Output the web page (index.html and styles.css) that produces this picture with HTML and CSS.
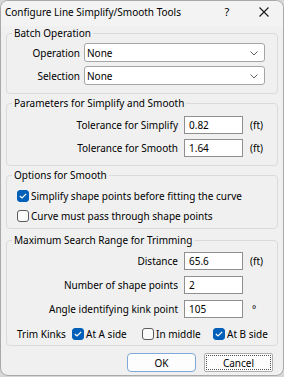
FILE: index.html
```html
<!DOCTYPE html>
<html>
<head>
<meta charset="utf-8">
<link rel="stylesheet" href="styles.css">
</head>
<body>
<div class="window">
  <div class="titlebar">
    <span class="title">Configure Line Simplify/Smooth Tools</span>
    <span class="help">?</span>
    <span class="close"><svg width="10" height="10" viewBox="0 0 10 10"><path d="M0.5 0.5 L9.5 9.5 M9.5 0.5 L0.5 9.5" stroke="#1a1a1a" stroke-width="1.1" fill="none"/></svg></span>
  </div>
  <div class="content">
    <fieldset class="group g1">
      <legend>Batch Operation</legend>
      <div class="combo-grid">
        <span class="lbl">Operation</span>
        <div class="combo"><span>None</span><svg class="chev" width="8" height="5" viewBox="0 0 8 5"><path d="M0.5 0.5 L4 4 L7.5 0.5" stroke="#606060" stroke-width="1" fill="none"/></svg></div>
        <span class="lbl">Selection</span>
        <div class="combo"><span>None</span><svg class="chev" width="8" height="5" viewBox="0 0 8 5"><path d="M0.5 0.5 L4 4 L7.5 0.5" stroke="#606060" stroke-width="1" fill="none"/></svg></div>
      </div>
    </fieldset>

    <fieldset class="group g2">
      <legend>Parameters for Simplify and Smooth</legend>
      <div class="field-grid">
        <span class="lbl">Tolerance for Simplify</span>
        <div class="input">0.82</div>
        <span class="unit">(ft)</span>
        <span class="lbl">Tolerance for Smooth</span>
        <div class="input">1.64</div>
        <span class="unit">(ft)</span>
      </div>
    </fieldset>

    <fieldset class="group g3">
      <legend>Options for Smooth</legend>
      <div class="checks">
        <div class="check-row"><span class="cb checked"><svg width="8" height="6" viewBox="0 0 8 6"><path d="M0.8 3 L3 5 L7.2 0.8" stroke="#fff" stroke-width="1.2" fill="none"/></svg></span><span>Simplify shape points before fitting the curve</span></div>
        <div class="check-row"><span class="cb"></span><span>Curve must pass through shape points</span></div>
      </div>
    </fieldset>

    <fieldset class="group g4">
      <legend>Maximum Search Range for Trimming</legend>
      <div class="field-grid g4grid">
        <span class="lbl">Distance</span>
        <div class="input">65.6</div>
        <span class="unit">(ft)</span>
        <span class="lbl">Number of shape points</span>
        <div class="input">2</div>
        <span class="unit"></span>
        <span class="lbl">Angle identifying kink point</span>
        <div class="input">105</div>
        <span class="unit deg">°</span>
      </div>
      <div class="trim-row">
        <span class="trim-lbl">Trim Kinks</span>
        <span class="trim-item a"><span class="cb checked"><svg width="8" height="6" viewBox="0 0 8 6"><path d="M0.8 3 L3 5 L7.2 0.8" stroke="#fff" stroke-width="1.2" fill="none"/></svg></span><span>At A side</span></span>
        <span class="trim-item b"><span class="cb"></span><span>In middle</span></span>
        <span class="trim-item c"><span class="cb checked"><svg width="8" height="6" viewBox="0 0 8 6"><path d="M0.8 3 L3 5 L7.2 0.8" stroke="#fff" stroke-width="1.2" fill="none"/></svg></span><span>At B side</span></span>
      </div>
    </fieldset>

    <div class="buttons">
      <button class="btn ok">OK</button>
      <button class="btn cancel"><span>Cancel</span></button>
    </div>
  </div>
</div>
</body>
</html>
```

FILE: styles.css
```css
* { box-sizing: border-box; }
html, body { margin: 0; padding: 0; }
body {
  width: 284px;
  height: 377px;
  background: #d6d6d6;
  font-family: "Noto Sans", "Segoe UI", sans-serif;
  font-size: 10px;
  color: #000;
  overflow: hidden;
}
.window {
  width: 284px;
  height: 376px;
  border: 1px solid #a9a9a9;
  border-radius: 8px;
  background: #f0f0f0;
  overflow: hidden;
  display: flex;
  flex-direction: column;
}
.titlebar {
  height: 25px;
  flex: none;
  display: flex;
  align-items: flex-start;
  padding: 4px 0 0 4px;
  background: #f3f3f3;
  line-height: 14px;
}
.title { flex: 1; }
.help {
  width: 36px;
  text-align: center;
  font-size: 11px;
}
.close {
  width: 38px;
  display: flex;
  justify-content: center;
  padding-top: 2px;
}
.content {
  padding: 0 5px;
  display: flex;
  flex-direction: column;
}
.group {
  margin: 0;
  padding: 0;
  border: 1px solid #dadada;
  border-radius: 4px;
  min-width: 0;
}
.group legend {
  padding: 0 2px;
  margin-left: 5px;
  line-height: 14px;
}
.g2 { margin-top: 2px; }
.g3 { margin-top: 2px; }
.g4 { margin-top: 4px; }

.lbl { text-align: right; white-space: nowrap; }

.combo-grid {
  display: grid;
  grid-template-columns: 1fr 181px;
  column-gap: 4px;
  row-gap: 4px;
  align-items: center;
  padding: 3px 12px 8px 0;
}
.combo {
  height: 19px;
  background: #fff;
  border: 1px solid #a5a5a5;
  border-radius: 3px;
  display: flex;
  align-items: center;
  justify-content: space-between;
  padding: 0 6px 0 2px;
}
.chev { margin-top: 1px; }

.field-grid {
  display: grid;
  grid-template-columns: 1fr 59px 28px;
  column-gap: 6px;
  row-gap: 5px;
  align-items: center;
  padding: 6px 0 8px 0;
}
.input {
  height: 18px;
  background: #fff;
  border: 1px solid #8f8f8f;
  padding: 0 4px;
  display: flex;
  align-items: center;
}
.unit { padding-left: 1px; }
.deg { padding-left: 3px; }

.checks {
  padding: 4px 0 2px 10px;
  display: flex;
  flex-direction: column;
}
.check-row {
  height: 20px;
  display: flex;
  align-items: center;
  gap: 2px;
}
.cb {
  width: 12px;
  height: 12px;
  flex: none;
  border: 1px solid #5c5c5c;
  border-radius: 3px;
  background: #fbfbfb;
  display: flex;
  align-items: center;
  justify-content: center;
}
.cb.checked {
  background: #005fb8;
  border-color: #005fb8;
}

.g4grid { padding: 5px 0 6px 0; row-gap: 6px; }
.trim-row {
  height: 20px;
  display: flex;
  align-items: center;
  padding-left: 10px;
  margin-bottom: 1px;
}
.trim-lbl { width: 55px; }
.trim-item { display: flex; align-items: center; gap: 2px; }
.trim-item.a { width: 70px; }
.trim-item.b { width: 71px; }

.buttons {
  display: flex;
  justify-content: flex-end;
  gap: 8px;
  margin-top: 7px;
  padding-right: 5px;
}
.btn {
  width: 69px;
  height: 19px;
  font: inherit;
  color: #000;
  background: #fdfdfd;
  border: 1px solid #d0d0d0;
  border-radius: 4px;
  padding: 0;
  display: flex;
  align-items: center;
  justify-content: center;
}
.btn.ok {
  border-color: #7fa8d8;
}
.btn.cancel {
  border-color: #adadad;
  border-radius: 2px;
  padding: 1px;
}
.btn.cancel span {
  width: 100%;
  height: 100%;
  border: 1px dotted #505050;
  display: flex;
  align-items: center;
  justify-content: center;
}
```
